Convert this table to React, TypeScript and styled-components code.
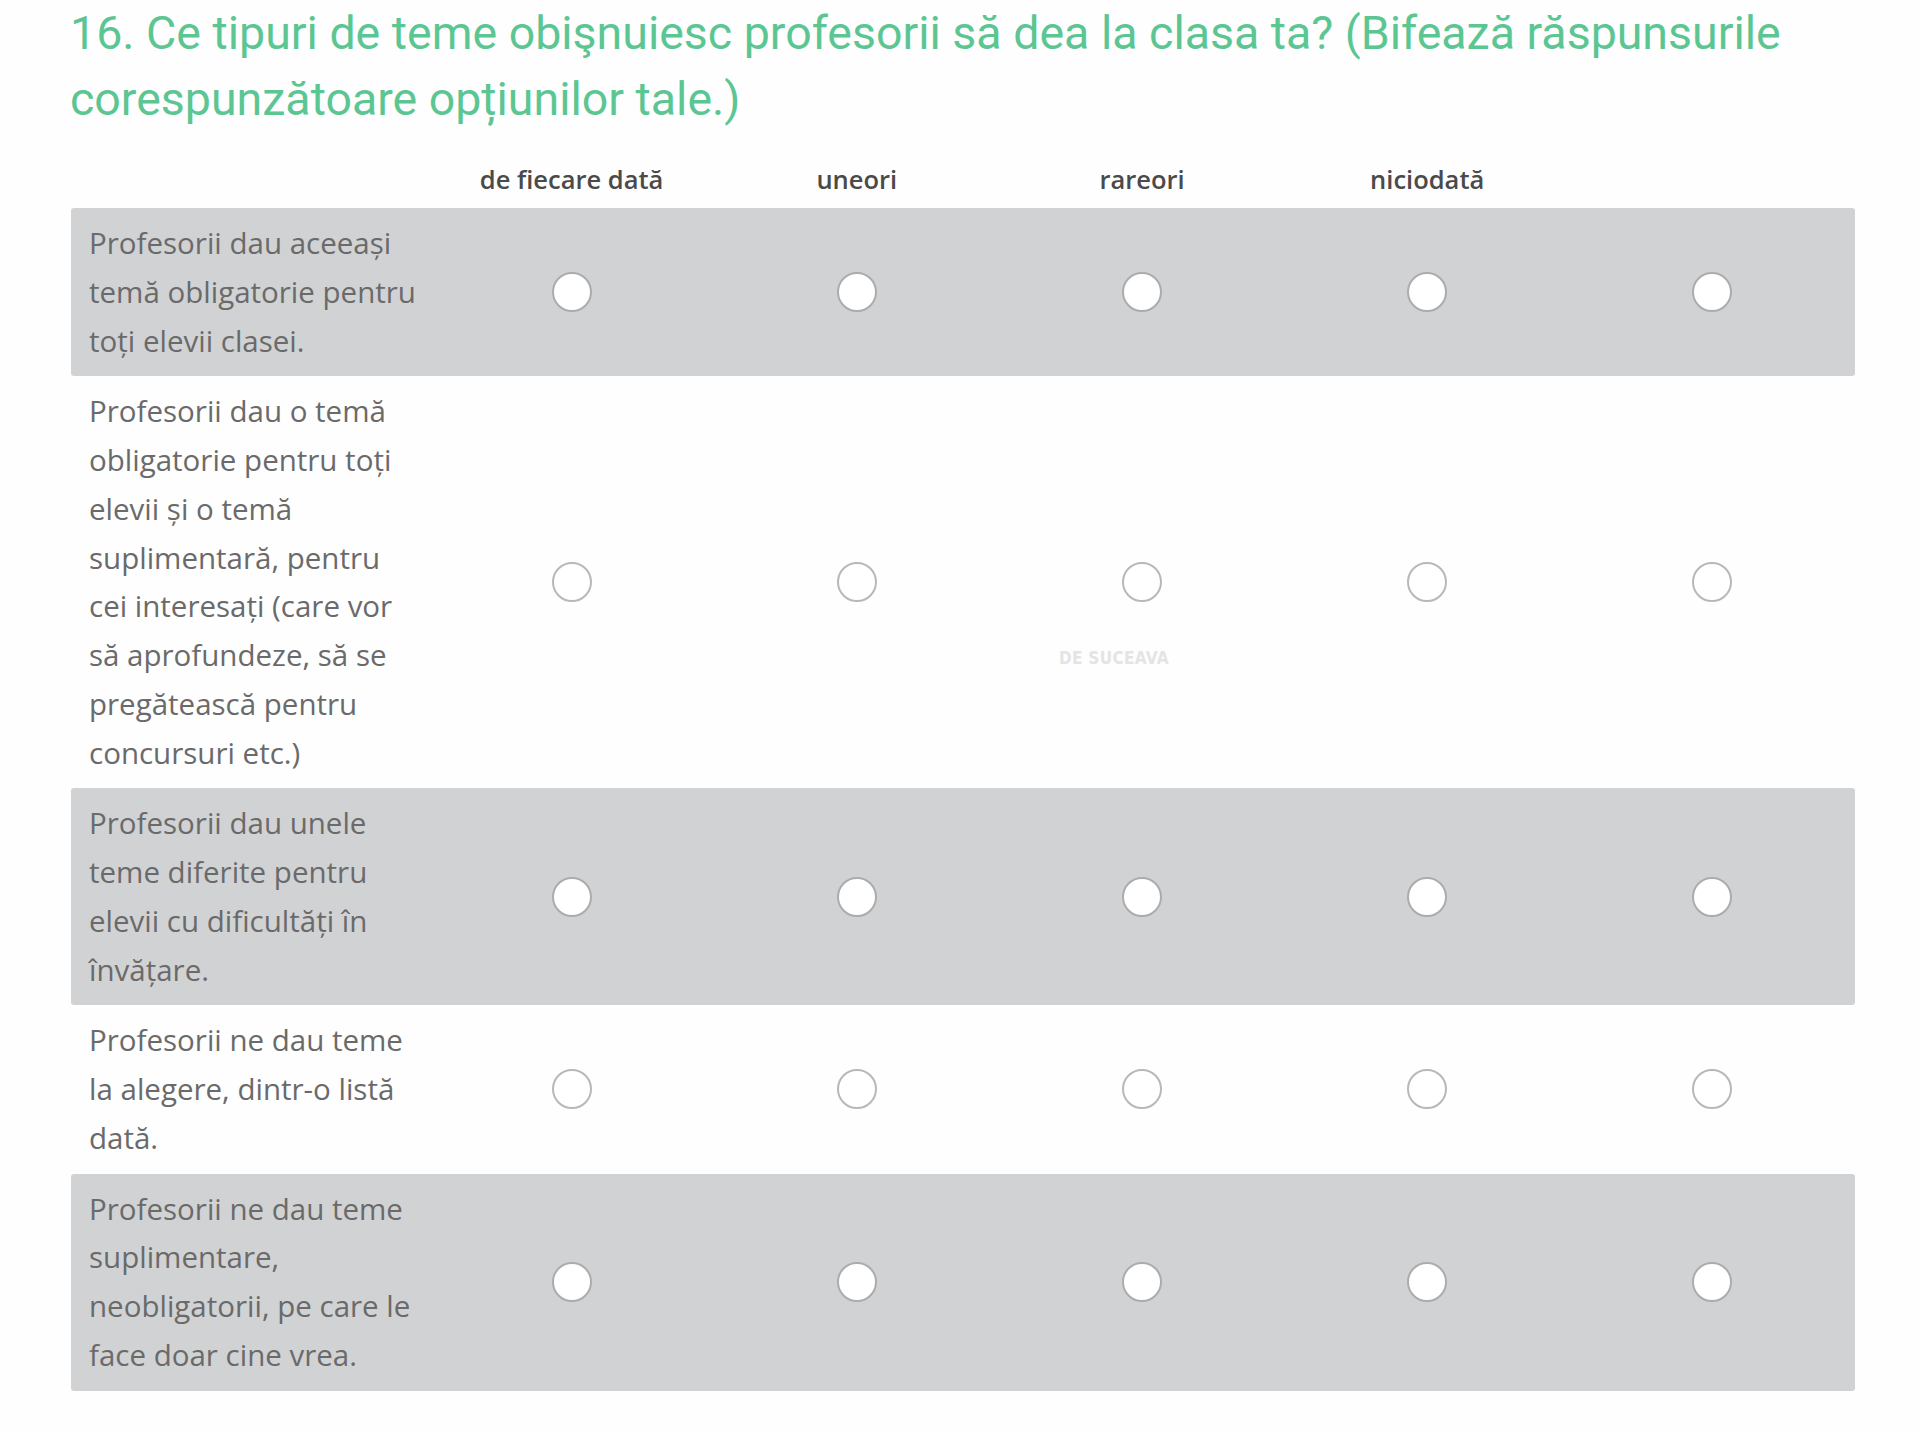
import styled, { createGlobalStyle } from 'styled-components';

const GlobalStyle = createGlobalStyle`
  html, body {
    margin: 0;
    padding: 0;
    background: #ffffff;
  }
`

const Page = styled.div`
  width: 1920px;
  min-height: 1434px;
  box-sizing: border-box;
  padding: 0 65px 0 70px;
  background: #fefefe;
`
const Title = styled.h1`
  margin: 0;
  font-family: Roboto, "Liberation Sans", sans-serif;
  font-weight: 400;
  font-size: 46.5px;
  line-height: 66px;
  color: #5cc693;
`
const Table = styled.div`
  position: relative;
  margin-left: 1px;
`
const Head = styled.div`
  display: grid;
  grid-template-columns: 358px repeat(5, 1fr);
  height: 76px;
  box-sizing: border-box;
  padding-bottom: 12px;
  align-items: end;
`
const HeadCell = styled.div`
  text-align: center;
  font-family: "Open Sans", sans-serif;
  font-weight: 600;
  font-size: 25.5px;
  line-height: 34px;
  color: #4a4a4a;
`
const Row = styled.div<{ $shaded?: boolean }>`
  display: grid;
  grid-template-columns: 358px repeat(5, 1fr);
  align-items: center;
  background: ${(p) => (p.$shaded ? '#d1d2d4' : 'transparent')};
  border-radius: 3px;
`
const Label = styled.div`
  padding: 11px 9px 11px 18px;
  font-family: "Open Sans", sans-serif;
  font-size: 29.5px;
  line-height: 48.75px;
  color: #6a6a6a;
`
const Cell = styled.label`
  display: flex;
  justify-content: center;
  align-items: center;
`
const Radio = styled.span<{ $shaded?: boolean }>`
  width: 40px;
  height: 40px;
  box-sizing: border-box;
  border-radius: 50%;
  background: #ffffff;
  border: 2px solid ${(p) => (p.$shaded ? '#abacae' : '#b8b8b8')};
`
const Watermark = styled.div`
  position: absolute;
  left: 988px;
  top: 516px;
  font-family: "DejaVu Sans Condensed", "DejaVu Sans", sans-serif;
  font-weight: 700;
  font-size: 17px;
  color: #e4e4e4;
  letter-spacing: 0.3px;
`

const options = ['de fiecare dată', 'uneori', 'rareori', 'niciodată', '']

const statements = [
  'Profesorii dau aceeași temă obligatorie pentru toți elevii clasei.',
  'Profesorii dau o temă obligatorie pentru toți elevii și o temă suplimentară, pentru cei interesați (care vor să aprofundeze, să se pregătească pentru concursuri etc.)',
  'Profesorii dau unele teme diferite pentru elevii cu dificultăți în învățare.',
  'Profesorii ne dau teme la alegere, dintr-o listă dată.',
  'Profesorii ne dau teme suplimentare, neobligatorii, pe care le face doar cine vrea.',
]

export default function App() {
  return (
    <>
      <GlobalStyle />
      <Page>
        <Title>
          16. Ce tipuri de teme obişnuiesc profesorii să dea la clasa ta? (Bifează răspunsurile corespunzătoare opțiunilor tale.)
        </Title>
        <Table>
          <Head>
            <div />
            {options.map((o, i) => (
              <HeadCell key={i}>{o}</HeadCell>
            ))}
          </Head>
          {statements.map((s, i) => {
            const shaded = i % 2 === 0
            return (
              <Row key={i} $shaded={shaded}>
                <Label>{s}</Label>
                {options.map((_, j) => (
                  <Cell key={j}>
                    <Radio $shaded={shaded} />
                  </Cell>
                ))}
              </Row>
            )
          })}
          <Watermark>DE SUCEAVA</Watermark>
        </Table>
      </Page>
    </>
  )
}
